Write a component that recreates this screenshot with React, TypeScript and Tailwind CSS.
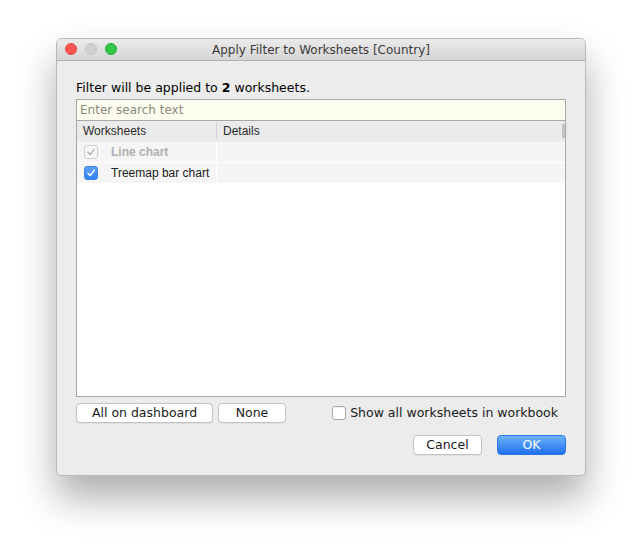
import React from "react";

const font = { fontFamily: '"Liberation Sans", Arial, sans-serif' };
const wide = { fontFamily: '"DejaVu Sans", "Liberation Sans", sans-serif' };

function Check({ checked, disabled }: { checked: boolean; disabled?: boolean }) {
  if (!checked) {
    return (
      <span className="inline-block w-[14px] h-[14px] rounded-[3px] border border-[#a8a8a8] bg-white shadow-[inset_0_1px_0_rgba(0,0,0,0.04)]" />
    );
  }
  return (
    <span
      className={
        disabled
          ? "flex items-center justify-center w-[14px] h-[14px] rounded-[3px] border border-[#d0d0d0] bg-[#f8f8f8]"
          : "flex items-center justify-center w-[14px] h-[14px] rounded-[3px] bg-gradient-to-b from-[#5ea2f8] to-[#2f7ef2] border border-[#3b82e6]"
      }
    >
      <svg width="10" height="10" viewBox="0 0 10 10">
        <path
          d="M2 5.3 L4.1 7.6 L8.2 2.3"
          fill="none"
          stroke={disabled ? "#b4b4b4" : "#ffffff"}
          strokeWidth="1.5"
          strokeLinecap="round"
          strokeLinejoin="round"
        />
      </svg>
    </span>
  );
}

export default function App() {
  return (
    <div className="w-[642px] h-[549px] bg-white pl-[56px] pt-[38px]" style={font}>
      <div className="w-[530px] h-[438px] flex flex-col rounded-[5px] bg-[#ececec] border border-[#b9b9b9] shadow-[0_22px_38px_rgba(0,0,0,0.32)] overflow-hidden">
        {/* title bar */}
        <div className="relative h-[22px] flex items-center justify-center bg-gradient-to-b from-[#ebebeb] to-[#d5d5d5] border-b border-[#b1b1b1]">
          <div className="absolute left-[8px] top-[4px] flex gap-[8px]">
            <span className="w-[12px] h-[12px] rounded-full bg-[#fc5753] border border-[#df4744]" />
            <span className="w-[12px] h-[12px] rounded-full bg-[#d0d0d0] border border-[#c1c1c1]" />
            <span className="w-[12px] h-[12px] rounded-full bg-[#33c748] border border-[#27aa35]" />
          </div>
          <span className="text-[12px] text-[#3a3a3a]" style={wide}>
            Apply Filter to Worksheets [Country]
          </span>
        </div>

        <div className="flex flex-col px-[19px] pt-[19px]" style={wide}>
          <p className="text-[12.5px] leading-[16px] text-black">
            Filter will be applied to <b>2</b> worksheets.
          </p>

          <div className="mt-[3px] h-[22px] flex items-center border border-[#a7a7a7] bg-[#fdfdef] px-[3px]">
            <span className="text-[12px] text-[#8a8a7c]">Enter search text</span>
          </div>

          <div className="h-[276px] flex flex-col bg-white border border-t-0 border-[#a7a7a7]" style={font}>
            <div className="h-[21px] flex bg-[#ebebeb] text-[12px] text-[#2a2a2a] pb-[1px]">
              <div className="w-[140px] flex items-center pl-[6px] border-r border-[#d2d2d2] my-[2px]">
                Worksheets
              </div>
              <div className="flex-1 flex items-center pl-[6px]">Details</div>
              <div className="w-[3px] bg-[#c4c4c4] my-[3px]" />
            </div>
            <div className="h-[21px] flex items-center bg-[#f5f5f5] border-b border-white pb-[1px]">
              <div className="w-[140px] flex items-center pl-[7px] gap-[13px] h-full border-r border-white">
                <Check checked disabled />
                <span className="text-[12px] text-[#b0b0b0] font-bold">Line chart</span>
              </div>
            </div>
            <div className="h-[20px] flex items-center bg-[#f5f5f5] pb-[1px]">
              <div className="w-[140px] flex items-center pl-[7px] gap-[13px] h-full border-r border-white">
                <Check checked />
                <span className="text-[12px] text-[#1a1a1a]">Treemap bar chart</span>
              </div>
            </div>
          </div>

          <div className="mt-[6px] flex items-center">
            <button className="w-[137px] h-[20px] rounded-[4px] bg-white border border-[#c2c2c2] shadow-[0_1px_0_rgba(0,0,0,0.05)] text-[12.5px] text-[#1a1a1a]">
              All on dashboard
            </button>
            <button className="ml-[5px] w-[68px] h-[20px] rounded-[4px] bg-white border border-[#c2c2c2] shadow-[0_1px_0_rgba(0,0,0,0.05)] text-[12.5px] text-[#1a1a1a]">
              None
            </button>
            <label className="ml-auto mr-[8px] flex items-center gap-[4px] text-[12.5px] text-[#1a1a1a]">
              <Check checked={false} />
              Show all worksheets in workbook
            </label>
          </div>

          <div className="mt-[12px] flex justify-end gap-[15px]">
            <button className="w-[69px] h-[20px] rounded-[4px] bg-white border border-[#c2c2c2] shadow-[0_1px_0_rgba(0,0,0,0.05)] text-[12.5px] text-[#1a1a1a]">
              Cancel
            </button>
            <button className="w-[69px] h-[20px] rounded-[4px] bg-gradient-to-b from-[#6cb3fa] to-[#1e6ff0] border border-[#2a73e8] text-[12.5px] text-white">
              OK
            </button>
          </div>
        </div>
      </div>
    </div>
  );
}
